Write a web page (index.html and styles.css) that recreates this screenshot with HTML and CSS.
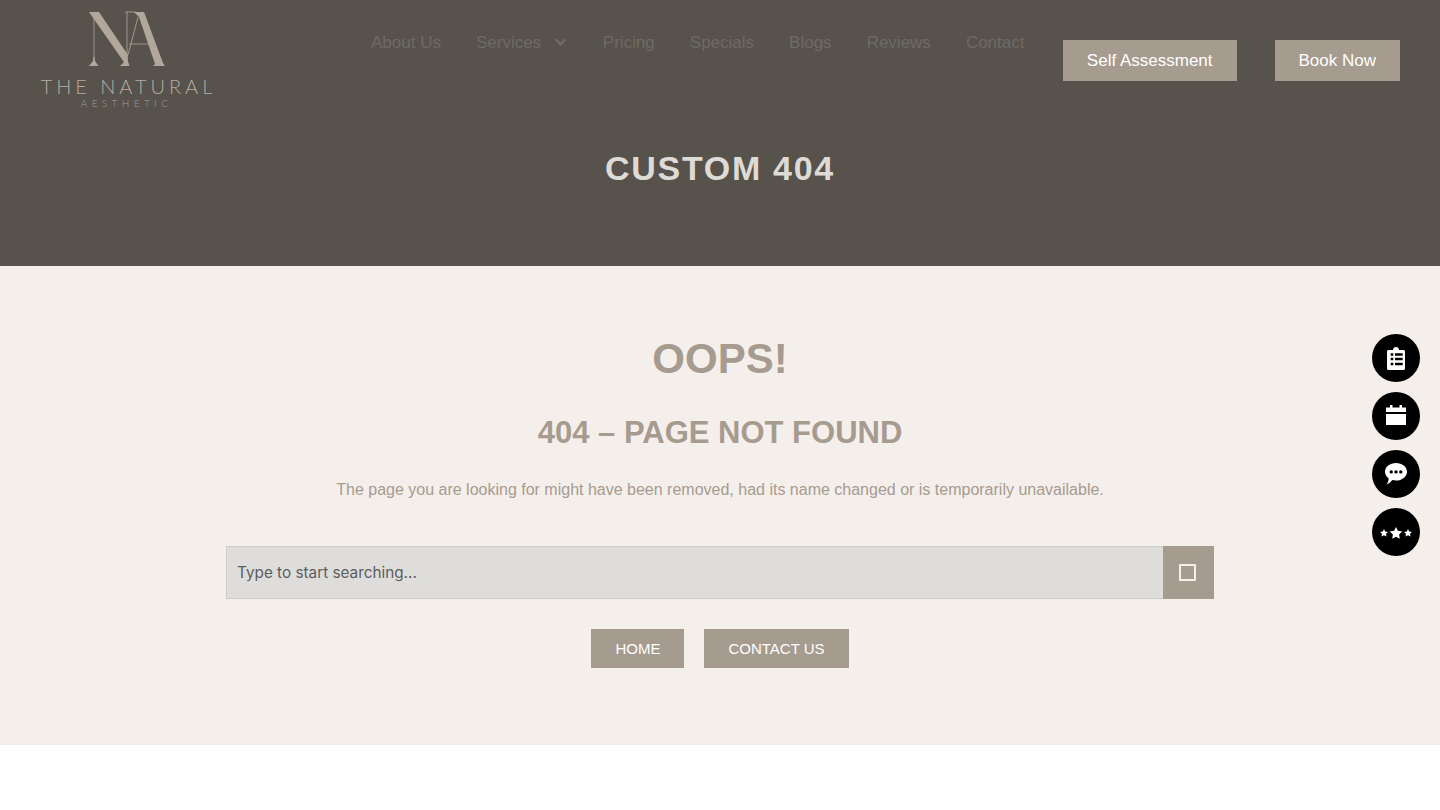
FILE: index.html
```html
<!DOCTYPE html>
<html lang="en">
<head>
    <meta charset="UTF-8">
    <title>Custom 404</title>
    <link rel="stylesheet" href="styles.css">
</head>
<body>
    <section class="hero">
        <header class="site-header">
            <a class="logo" href="#">
                <svg class="logo-mark" width="80" height="56" viewBox="0 0 80 56">
                    <g fill="#b1a79b">
                        <path d="M2 1H12L41 44L39 54Z"/>
                        <path d="M47 1H57L76 52L78 55H66L68 53L52 6Z"/>
                        <path d="M2 55H11.500L8 50L7.500 46H6.500L6 50Z"/>
                        <path d="M33 55H42.500L41 50L40.500 46H39.500L38 50Z"/>
                    </g>
                    <path d="M7 2V48M40 1V48M38 1H49M51 6L41 44M42 33H63" fill="none" stroke="#b1a79b" stroke-width="0.8"/>
                </svg>
                <span class="logo-name">THE NATURAL</span>
                <span class="logo-sub">AESTHETIC</span>
            </a>
            <nav class="main-nav">
                <a href="#">About Us</a>
                <a href="#" class="has-sub">Services
                    <svg width="13" height="8" viewBox="0 0 13 8"><path d="M1.500 1.200L6.500 6.200L11.500 1.200" fill="none" stroke="#6e6a64" stroke-width="2.600"/></svg>
                </a>
                <a href="#">Pricing</a>
                <a href="#">Specials</a>
                <a href="#">Blogs</a>
                <a href="#">Reviews</a>
                <a href="#">Contact</a>
            </nav>
            <div class="header-buttons">
                <a class="header-btn" href="#">Self Assessment</a>
                <a class="header-btn" href="#">Book Now</a>
            </div>
        </header>
        <h1>CUSTOM 404</h1>
    </section>

    <main class="not-found">
        <h2>OOPS!</h2>
        <h3>404 – PAGE NOT FOUND</h3>
        <p>The page you are looking for might have been removed, had its name changed or is temporarily unavailable.</p>
        <form class="search-form">
            <input type="text" placeholder="Type to start searching...">
            <button type="button" class="search-btn"><span class="missing-icon"></span></button>
        </form>
        <div class="actions">
            <a class="action-btn" href="#">HOME</a>
            <a class="action-btn" href="#">CONTACT US</a>
        </div>
    </main>

    <div class="footer-space"></div>

    <aside class="side-icons">
        <a href="#">
            <svg width="18" height="23" viewBox="0 0 18 23"><path fill-rule="evenodd" fill="#fff" d="M1.500 3H6C6 1.200 7.400 0 9 0S12 1.200 12 3H16.500C17.300 3 18 3.700 18 4.500V21.500C18 22.300 17.300 23 16.500 23H1.500C.7 23 0 22.300 0 21.500V4.500C0 3.700 .7 3 1.500 3ZM3.700 6.300V8.700H6.300V6.300ZM8 6.300V8.700H15.700V6.300ZM3.700 10.800V13.200H6.300V10.800ZM8 10.800V13.200H15.700V10.800ZM3.700 15.800V18.200H6.300V15.800ZM8 15.800V18.200H15.700V15.800Z"/></svg>
        </a>
        <a href="#">
            <svg width="20" height="22" viewBox="0 0 20 22"><path fill="#fff" d="M0 9H20V20H0ZM0 2.500H4V0H6.500V2.500H13.500V0H16V2.500H20V7H0Z"/></svg>
        </a>
        <a href="#">
            <svg width="22" height="22" viewBox="0 0 22 22"><path fill-rule="evenodd" fill="#fff" d="M11 0C17 0 22 3.800 22 8.800S17 17.600 11 17.600C9.700 17.600 8.500 17.400 7.300 17.100C6 18.800 3.800 21 1.500 21.600C2.800 20 3.600 17.500 3.700 15.500C1.400 13.900 0 11.500 0 8.800C0 3.800 5 0 11 0ZM6.200 7.200A1.700 1.700 0 1 0 6.200 10.600A1.700 1.700 0 1 0 6.200 7.200ZM11 7.200A1.700 1.700 0 1 0 11 10.600A1.700 1.700 0 1 0 11 7.200ZM15.800 7.200A1.700 1.700 0 1 0 15.800 10.600A1.700 1.700 0 1 0 15.800 7.200Z"/></svg>
        </a>
        <a href="#">
            <svg class="stars" width="34" height="12" viewBox="0 0 34 12"><path fill="#fff" d="M5 2L6.200 4.500L9 4.900L7 6.800L7.500 9.600L5 8.300L2.500 9.600L3 6.800L1 4.900L3.800 4.500Z"/><path fill="#fff" d="M17 0L18.900 3.800L23.200 4.400L20.100 7.400L20.800 11.700L17 9.700L13.200 11.700L13.900 7.400L10.800 4.400L15.100 3.800Z"/><path fill="#fff" d="M29 2L30.200 4.500L33 4.900L31 6.800L31.500 9.600L29 8.300L26.500 9.600L27 6.800L25 4.900L27.800 4.500Z"/></svg>
        </a>
    </aside>
</body>
</html>
```

FILE: styles.css
```css
* {
    box-sizing: border-box;
}

body {
    margin: 0;
    font-family: 'Liberation Sans', Arial, sans-serif;
    background-color: #fefefe;
}

a {
    text-decoration: none;
}

.hero {
    height: 266px;
    background-color: #57524c;
}

.site-header {
    display: flex;
    align-items: flex-start;
    padding: 0 40px;
    height: 130px;
}

.logo {
    display: flex;
    flex-direction: column;
    align-items: center;
    width: 173px;
    padding-top: 11px;
    color: #b6aca1;
}

.logo-mark {
    display: block;
}

.logo-name {
    margin-top: 9px;
    margin-left: 4px;
    font-family: Lato, sans-serif;
    font-weight: 300;
    font-size: 20px;
    line-height: 20px;
    letter-spacing: 3.95px;
    white-space: nowrap;
}

.logo-sub {
    margin-top: 1px;
    font-family: Lato, sans-serif;
    font-weight: 300;
    font-size: 10px;
    line-height: 12px;
    letter-spacing: 4.4px;
    opacity: 0.8;
}

.main-nav {
    display: flex;
    gap: 35px;
    margin-left: 158px;
    padding-top: 33px;
}

.main-nav a {
    color: #6e6a64;
    font-size: 17px;
    line-height: 20px;
}

.has-sub svg {
    margin-left: 8px;
    margin-right: 1px;
    vertical-align: 2px;
}

.header-buttons {
    display: flex;
    gap: 38px;
    margin-left: auto;
    padding-top: 40px;
}

.header-btn {
    display: block;
    height: 41px;
    padding: 0 24px;
    background-color: #a69b8f;
    color: #fff;
    font-size: 17px;
    line-height: 41px;
    white-space: nowrap;
}

h1 {
    margin: 0;
    padding-top: 18px;
    color: #dedbd6;
    font-size: 34px;
    line-height: 40px;
    letter-spacing: 1.7px;
    text-align: center;
}

.not-found {
    height: 479px;
    padding-top: 68px;
    background-color: #f5efec;
    text-align: center;
    color: #a69b8f;
}

h2 {
    margin: 0;
    font-size: 42px;
    line-height: 50px;
}

h3 {
    margin: 29px 0 0;
    font-size: 31px;
    line-height: 40px;
}

.not-found p {
    margin: 25px 0 0;
    font-size: 16px;
    line-height: 24px;
}

.search-form {
    display: flex;
    width: 988px;
    height: 53px;
    margin: 44px auto 0;
}

.search-form input {
    flex: 1;
    padding: 0 10px;
    border: 1px solid #cfcdc9;
    border-right: none;
    background-color: #dedddb;
    font-family: Inter, sans-serif;
    font-size: 15.3px;
    outline: none;
}

.search-form input::placeholder {
    color: #5c5e61;
    opacity: 1;
}

.search-btn {
    display: flex;
    align-items: center;
    justify-content: center;
    width: 51px;
    padding: 0 3px 0 0;
    border: none;
    background-color: #a69b8f;
}

.missing-icon {
    width: 17px;
    height: 17px;
    border: 2.500px solid #f5efec;
}

.actions {
    display: flex;
    justify-content: center;
    gap: 20px;
    margin-top: 30px;
}

.action-btn {
    height: 39px;
    padding: 0 24px;
    background-color: #a69b8f;
    color: #fff;
    font-size: 15px;
    line-height: 39px;
}

.footer-space {
    height: 65px;
}

.side-icons {
    position: fixed;
    top: 334px;
    right: 20px;
    display: flex;
    flex-direction: column;
    gap: 10px;
}

.side-icons a {
    display: flex;
    align-items: center;
    justify-content: center;
    width: 48px;
    height: 48px;
    border-radius: 50%;
    background-color: #000;
}

.stars {
    margin-top: 2px;
}
```
